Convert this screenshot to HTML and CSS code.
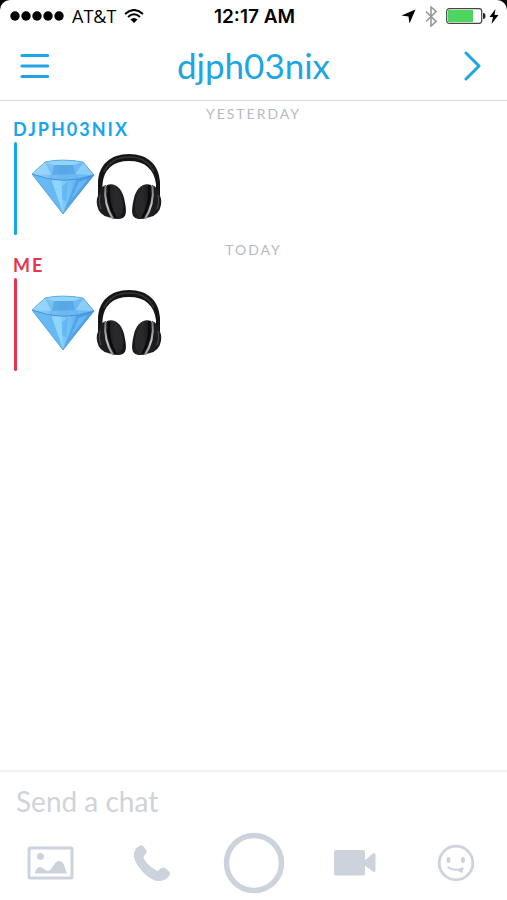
FILE: index.html
```html
<!DOCTYPE html>
<html lang="en">
<head>
<meta charset="utf-8">
<meta name="viewport" content="width=device-width, initial-scale=1">
<title>djph03nix</title>
<link rel="stylesheet" href="styles.css">
</head>
<body>
<svg class="defs" aria-hidden="true">
  <defs>
    <linearGradient id="crown" x1="0" y1="0" x2="1" y2="0">
      <stop offset="0" stop-color="#8fd4fb"/><stop offset=".45" stop-color="#6cb9f0"/><stop offset="1" stop-color="#6cbcf8"/>
    </linearGradient>
    <linearGradient id="pavilion" x1="0" y1="0" x2="1" y2="0">
      <stop offset="0" stop-color="#5db4f1"/><stop offset=".45" stop-color="#83d0fc"/><stop offset="1" stop-color="#3f94e2"/>
    </linearGradient>
    <linearGradient id="cushion" x1="0" y1="0" x2="1" y2="0">
      <stop offset="0" stop-color="#161618"/><stop offset=".5" stop-color="#2c2c30"/><stop offset="1" stop-color="#101012"/>
    </linearGradient>
    <linearGradient id="metal" x1="0" y1="0" x2="0" y2="1">
      <stop offset="0" stop-color="#77777c"/><stop offset=".6" stop-color="#c4c4c9"/><stop offset="1" stop-color="#98989e"/>
    </linearGradient>
    <symbol id="gem" viewBox="0 0 64 56">
      <path d="M1 15 14 3Q31-1 52 3L63 16 32 55Z" fill="url(#pavilion)"/>
      <path d="M1 15 14 3Q31-1 52 3L63 16Q32 27 1 15Z" fill="url(#crown)"/>
      <path d="M14 3 21 16 1 15ZM52 3 44 15 63 16Z" fill="#a5defc" opacity=".55"/>
      <path d="M23 6H42L44 15 21 16Z" fill="#3f8fd6" opacity=".4"/>
      <path d="M14 3Q31-1 52 3L42 6H23Z" fill="#93d5fa"/>
      <path d="M1 15 20 21 32 55Z" fill="#66baf4"/>
      <path d="M20 21 30 22 32 55Z" fill="#9bdcfd" opacity=".6"/>
      <path d="M31 27 37 23 35 43 31 40Z" fill="#3d9cea" opacity=".35"/>
      <path d="M46 21 63 16 32 55Z" fill="#4b9de6" opacity=".7"/>
      <path d="M48 23 57 20 39 42Z" fill="#79c6f9" opacity=".6"/>
      <path d="M1 15Q32 27 63 16" fill="none" stroke="#2c77c2" stroke-width="1" opacity=".6"/>
      <path d="M20 21 32 55 46 21M14 3 21 15 20 21M52 3 44 15 46 21" fill="none" stroke="#2c77c2" stroke-width=".6" opacity=".3"/>
      <path d="M1 15 14 3Q31-1 52 3L63 16 32 55Z" fill="none" stroke="#4d9ad3" stroke-width=".7"/>
    </symbol>
    <symbol id="phones" viewBox="0 0 66 66">
      <path d="M2 46V28C3 11 14 0 33 0S63 11 64 28V46L60 44V30C58 15 49 7 33 7S8 15 6.500 30V44Z" fill="#151517"/>
      <path d="M8 18Q15 3 33 3T58 18" fill="none" stroke="#36363a" stroke-width="1.500"/>
      <path d="M10 31Q4 33 3 40 0 44 1 51 3 61 12 63L19 65 16 42ZM56 31Q62 33 63 40 66 44 65 51 63 61 54 63L47 65 50 42Z" fill="#1d1d20"/>
      <path d="M4 41Q2 48 5 55M62 41Q64 48 61 55" fill="none" stroke="#505055" stroke-width="1"/>
      <path d="M11 31C19 28 26 35 28 44 30 53 31 60 28 63 25 66 19 65 17 64Q7 48 11 31Z" fill="url(#cushion)"/>
      <path d="M55 31C47 28 40 35 38 44 36 53 35 60 38 63 41 66 47 65 49 64Q59 48 55 31Z" fill="url(#cushion)"/>
      <path d="M9.500 32Q7.500 50 17 65M56.500 32Q58.500 50 49 65" fill="none" stroke="url(#metal)" stroke-width="2"/>
      <path d="M13 32Q11 50 20 64M53 32Q55 50 46 64" fill="none" stroke="#09090a" stroke-width="2"/>
      <ellipse cx="22.500" cy="48" rx="4" ry="12" transform="rotate(-10 22.500 48)" fill="#29292c"/>
      <ellipse cx="43.500" cy="48" rx="4" ry="12" transform="rotate(10 43.500 48)" fill="#29292c"/>
    </symbol>
  </defs>
</svg>
<div class="screen">
  <div class="status">
    <div class="carrier">
      <svg width="54" height="10" viewBox="0 0 54 10" role="img" aria-label="Signal"><circle cx="5" cy="5" r="4.700"/><circle cx="16" cy="5" r="4.700"/><circle cx="27" cy="5" r="4.700"/><circle cx="38" cy="5" r="4.700"/><circle cx="49" cy="5" r="4.700"/></svg>
      <span class="carrier-name">AT&amp;T</span>
      <svg width="20" height="14" viewBox="0 0 20 14" role="img" aria-label="Wi-Fi"><path d="M1 5Q10-3 19 5M4 8Q10 2.500 16 8" fill="none" stroke="#000" stroke-width="2"/><path d="M6.500 10.500Q10 7.500 13.500 10.500L10 14Z"/></svg>
    </div>
    <time class="clock">12:17 AM</time>
    <div class="indicators">
      <svg width="15" height="15" viewBox="0 0 15 15" role="img" aria-label="Location"><path d="M14.500.5 8.500 14.500 7.500 7.500.5 6.500Z"/></svg>
      <svg class="bluetooth" width="12" height="21" viewBox="0 0 12 21" role="img" aria-label="Bluetooth"><path d="M1 5.500 11 15.500 6 20V1L11 5.500 1 15.500" fill="none" stroke="#999" stroke-width="1.600"/></svg>
      <svg class="battery" width="40" height="16" viewBox="0 0 40 16" role="img" aria-label="Battery"><rect x=".7" y=".7" width="35" height="14.600" rx="2.500" fill="#fff" stroke="#444" stroke-width="1.200"/><path d="M2 2H27V14H2Z" fill="#4cd55f"/><path d="M37 5Q39.500 5 39.500 8T37 11Z" fill="#222"/></svg>
      <svg width="10" height="15" viewBox="0 0 10 15" role="img" aria-label="Charging"><path d="M6.500 0 .5 8H4L2.500 15 9.500 6H5.500Z"/></svg>
    </div>
  </div>
  <header class="header">
    <button class="icon-button" aria-label="Menu"><svg width="29" height="26" viewBox="0 0 29 26"><path d="M2 2.500H27.500M2 13H27.500M2 23.500H27.500" fill="none" stroke="#1da5e4" stroke-width="3.200" stroke-linecap="round"/></svg></button>
    <h1 class="title">djph03nix</h1>
    <button class="icon-button next" aria-label="Next"><svg width="18" height="30" viewBox="0 0 18 30"><path d="M2 2 15 15 2 28" fill="none" stroke="#1da5e4" stroke-width="3" stroke-linecap="round" stroke-linejoin="round"/></svg></button>
  </header>
  <main class="chat">
    <section class="day">
      <h2 class="date">YESTERDAY</h2>
      <h3 class="sender them">DJPH03NIX</h3>
      <div class="message them">
        <svg class="gem" width="64" height="56" role="img" aria-label="Gem"><use href="#gem"/></svg>
        <svg class="phones" width="66" height="66" role="img" aria-label="Headphones"><use href="#phones"/></svg>
      </div>
    </section>
    <section class="day">
      <h2 class="date">TODAY</h2>
      <h3 class="sender me">ME</h3>
      <div class="message me">
        <svg class="gem" width="64" height="56" role="img" aria-label="Gem"><use href="#gem"/></svg>
        <svg class="phones" width="66" height="66" role="img" aria-label="Headphones"><use href="#phones"/></svg>
      </div>
    </section>
  </main>
  <footer class="composer">
    <input class="field" type="text" placeholder="Send a chat" aria-label="Send a chat">
    <div class="tools">
      <button class="tool" aria-label="Photos"><svg width="48" height="34" viewBox="0 0 48 34"><rect x="2" y="2" width="43" height="30" rx="1" fill="none" stroke="#cdd3dc" stroke-width="3"/><circle cx="13.500" cy="10.500" r="3.500"/><path d="M8 27.500V26Q10 21 13 21C16 21 18 25 21 25 25 25 27 15 32 15 37 15 37 20 40 27.500Z"/></svg></button>
      <button class="tool" aria-label="Call"><svg width="38" height="38" viewBox="0 0 38 38"><path d="M7 1.500Q9 .5 11 3L13.500 6.500Q14.500 8.500 12.500 10L11 12Q10 13.500 11 15 15 22 23.500 26.500 25 27 26.500 25.500L28.500 24Q30 23 32 24L35.500 27Q38 29 36.500 31 33 37 26 37 20 37 13 31 3 22 1 13 0 5 7 1.500Z"/></svg></button>
      <button class="tool" aria-label="Take a snap"><svg width="62" height="62" viewBox="0 0 62 62"><circle cx="31" cy="31" r="27.500" fill="none" stroke="#cdd3dc" stroke-width="5.500"/></svg></button>
      <button class="tool" aria-label="Video call"><svg width="42" height="26" viewBox="0 0 42 26"><rect width="31" height="25.500" rx="2"/><path d="M30 11 39 3.500Q41.500 2 41.500 5V20Q41.500 23 39 21.500L30 15Z"/></svg></button>
      <button class="tool" aria-label="Stickers"><svg width="38" height="38" viewBox="0 0 38 38"><circle cx="19" cy="19" r="16.800" fill="none" stroke="#cdd3dc" stroke-width="2.800"/><ellipse cx="11.500" cy="16" rx="2" ry="3"/><ellipse cx="26" cy="16" rx="2" ry="3"/><path d="M10.500 23Q17 28 26.500 24" fill="none" stroke="#cdd3dc" stroke-width="1.800"/><path d="M20.500 26 26.500 23.500 25.500 29Q22.500 29 20.500 26Z"/></svg></button>
    </div>
  </footer>
</div>
</body>
</html>
```
FILE: styles.css
```css
* {
  box-sizing: border-box;
}

body {
  margin: 0;
  background: #000;
  font-family: Lato, "Liberation Sans", sans-serif;
}

svg {
  display: block;
  flex: none;
}

button {
  padding: 0;
  border: 0;
  background: none;
}

h1,
h2,
h3 {
  margin: 0;
}

.defs {
  position: absolute;
  width: 0;
  height: 0;
}

.screen {
  display: flex;
  flex-direction: column;
  min-height: 100vh;
  border-radius: 10px 10px 0 0;
  background: #fff;
}

.status {
  display: grid;
  grid-template-columns: 1fr auto 1fr;
  align-items: center;
  height: 32px;
  padding: 0 8px 0 10px;
  font-family: Inter, "Liberation Sans", sans-serif;
}

.carrier,
.indicators {
  display: flex;
  align-items: center;
}

.carrier {
  gap: 8px;
}

.carrier-name {
  font-family: "Open Sans", sans-serif;
  font-size: 18px;
  line-height: 24px;
}

.clock {
  padding-top: 2px;
  font-size: 19px;
  font-weight: 600;
  line-height: 24px;
}

.indicators {
  justify-content: flex-end;
  gap: 9px;
}

.indicators .battery {
  margin-right: -6px;
}

.header {
  display: flex;
  align-items: center;
  justify-content: space-between;
  height: 69px;
  padding: 0 20px;
  border-bottom: 1px solid #d9d9da;
}

.icon-button {
  display: flex;
  width: 32px;
}

.icon-button.next {
  justify-content: flex-end;
  padding-right: 5px;
}

.title {
  margin-top: -2px;
  color: #1da5e4;
  font-size: 35px;
  font-weight: 400;
  line-height: 40px;
}

.chat {
  flex: 1;
}

.day {
  display: grid;
  height: 136px;
  padding: 2px 13px 0;
  grid-template-rows: 16px 23px auto;
  align-content: start;
}

.date {
  color: #b6bac0;
  font-size: 14px;
  font-weight: 400;
  line-height: 22px;
  letter-spacing: 2px;
  text-align: center;
}

.sender {
  font-size: 18px;
  font-weight: 700;
  line-height: 20px;
  letter-spacing: 2px;
}

.sender.them {
  color: #16a5ee;
}

.sender.me {
  color: #e7344f;
}

.message {
  display: flex;
  align-items: center;
  gap: 1px;
  height: 93px;
  margin-left: 1px;
  color: #16a5ee;
}

.message.me {
  color: #e7344f;
}

.message::before {
  content: "";
  width: 3px;
  height: 93px;
  margin-right: 13px;
  border-radius: 2px;
  background: currentColor;
}

.gem {
  margin-bottom: 4px;
}

.phones {
  margin-bottom: 4px;
}

.composer {
  padding: 10px 16px 6px;
  border-top: 2px solid #f1f2f3;
}

.field {
  display: block;
  width: 100%;
  height: 38px;
  padding: 0;
  border: 0;
  outline: 0;
  background: none;
  color: #333;
  font-family: inherit;
  font-size: 28px;
}

.field::placeholder {
  color: #d0d2db;
  opacity: 1;
}

.tools {
  display: flex;
  align-items: center;
  justify-content: space-between;
  height: 62px;
  margin-top: 12px;
}

.tool {
  display: flex;
  justify-content: center;
  width: 70px;
}

.tool svg {
  fill: #cdd3dc;
}
```
